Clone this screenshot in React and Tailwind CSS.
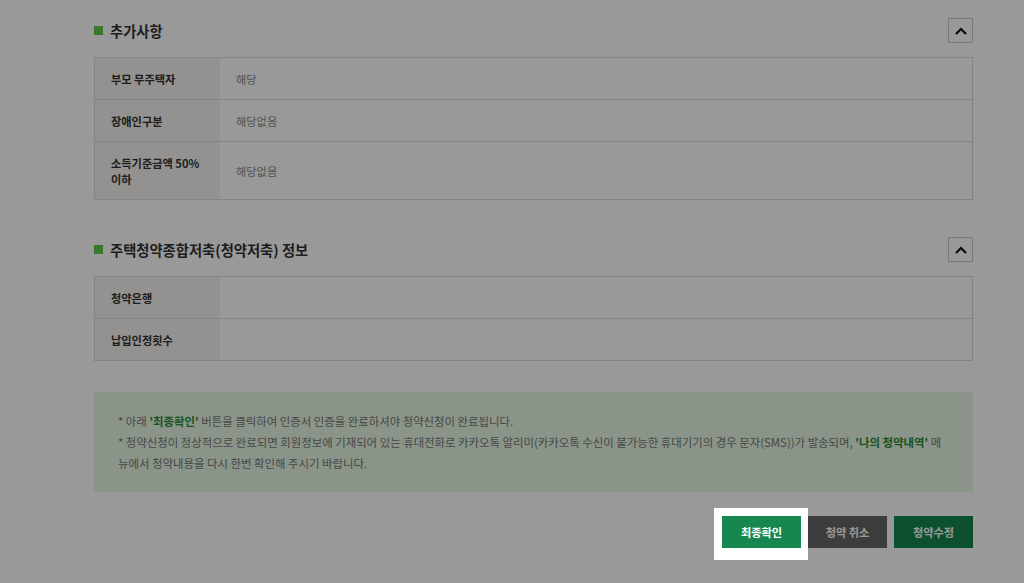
import React from 'react';

const extraRows = [
  { label: '부모 무주택자', value: '해당' },
  { label: '장애인구분', value: '해당없음' },
  { label: '소득기준금액 50% 이하', value: '해당없음' },
];

const savingsRows = [
  { label: '청약은행', value: '' },
  { label: '납입인정횟수', value: '' },
];

const ChevronUp = () => (
  <svg width="12" height="8" viewBox="0 0 12 8" fill="none">
    <polyline points="1,7 6,2 11,7" stroke="#111" strokeWidth="2.2" />
  </svg>
);

const Section = ({ title, rows, className = '' }) => (
  <div className={className}>
    <div className="flex items-center justify-between h-[25px]">
      <h3 className="flex items-center gap-[7px] text-[14.3px] font-semibold text-[#333]">
        <span className="w-[9px] h-[9px] bg-[#62c84a]" />
        {title}
      </h3>
      <button className="w-[25px] h-[25px] border border-[#cccccc] bg-white flex items-center justify-center">
        <ChevronUp />
      </button>
    </div>

    <div className="mt-[14px] border border-[#dddddd] divide-y divide-[#dddddd]">
      {rows.map((row) => (
        <div key={row.label} className="flex text-[11.2px] leading-[16px]">
          <div className="w-[125px] shrink-0 bg-[#f5f3f0] px-4 py-[12.5px] font-semibold text-[#333]">
            {row.label}
          </div>
          <div className="flex-1 flex items-center px-4 text-[#888]">{row.value}</div>
        </div>
      ))}
    </div>
  </div>
);

const App = () => {
  return (
    <div className="min-h-screen bg-white font-['Noto_Sans_CJK_KR',sans-serif]">
      <div className="ml-[94px] w-[879px] pt-[18px] pb-10">
        <Section title="추가사항" rows={extraRows} />
        <Section title="주택청약종합저축(청약저축) 정보" rows={savingsRows} className="mt-[37px]" />

        {/* 안내 문구 */}
        <div className="mt-[31px] bg-[#e6f7e3] pl-6 pr-[28px] pt-[19px] pb-[18px] text-[11.4px] leading-[21px] text-[#777]">
          <p>
            * 아래 <b className="text-[#2e8b35]">'최종확인'</b> 버튼을 클릭하여 인증서 인증을 완료하셔야 청약신청이 완료됩니다.
          </p>
          <p>
            * 청약신청이 정상적으로 완료되면 회원정보에 기재되어 있는 휴대전화로 카카오톡 알리미(카카오톡 수신이 불가능한 휴대기기의 경우 문자(SMS))가 발송되며,{' '}
            <b className="text-[#2e8b35]">'나의 청약내역'</b> 메뉴에서 청약내용을 다시 한번 확인해 주시기 바랍니다.
          </p>
        </div>

        <div className="mt-6 flex items-start justify-end gap-[7px]">
          <div className="relative z-20 bg-white -ml-2 -mr-[7px] -mt-2 -mb-3 pl-2 pr-[7px] pt-2 pb-3">
            <button className="w-[79px] h-[32px] bg-[#15874f] text-white text-[11.2px] font-semibold">
              최종확인
            </button>
          </div>
          <button className="w-[79px] h-[32px] bg-[#666666] text-white text-[11.2px] font-semibold">
            청약 취소
          </button>
          <button className="w-[79px] h-[32px] bg-[#15854f] text-white text-[11.2px] font-semibold">
            청약수정
          </button>
        </div>
      </div>

      {/* 가이드 딤 처리 */}
      <div className="fixed inset-0 z-10 bg-black/40" />
    </div>
  );
};

export default App;
